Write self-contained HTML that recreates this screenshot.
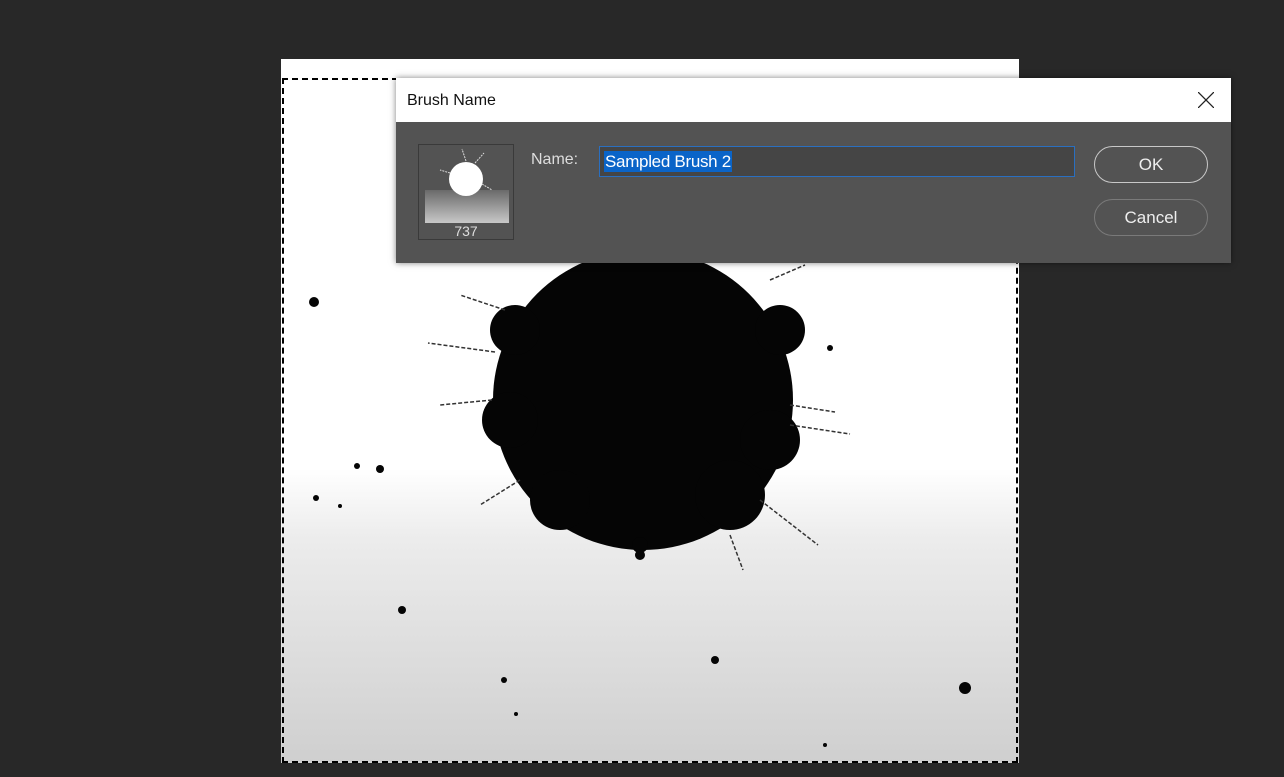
<!DOCTYPE html>
<html><head><style>
body{margin:0;width:1284px;height:777px;background:#282828;position:relative;overflow:hidden;font-family:"Segoe UI","Liberation Sans",sans-serif}
#cv{position:absolute;left:281px;top:59px;width:738px;height:704px;background:linear-gradient(#fff 0,#fff 410px,#ececec 480px,#cfcfcf 704px)}
#sel{position:absolute;left:282px;top:78px;width:736px;height:685px;border:2px dashed #000;box-sizing:border-box}
#dlg{position:absolute;left:396px;top:78px;width:835px;height:185px;background:#535353;box-shadow:0 0 6px rgba(0,0,0,.5)}
#tb{height:44px;background:#fff;color:#111;font-size:16px;line-height:46px;padding-left:11px}
.x{position:absolute;right:17px;top:14px}
#th{position:absolute;left:22px;top:66px;width:96px;height:96px;border:1px solid #3a3a3a;box-sizing:border-box}
#th span{position:absolute;bottom:0;width:100%;text-align:center;color:#ddd;font-size:14px}
#lbl{position:absolute;left:135px;top:73px;color:#ddd;font-size:16px}
#inp{position:absolute;left:203px;top:68px;width:476px;height:31px;border:1px solid #2a6fc0;background:#454545;box-sizing:border-box}
#inp span{position:absolute;left:4px;top:4px;background:#0a64c8;color:#fff;font-size:17px;line-height:21px;padding:0 1px;letter-spacing:-0.3px}
.btn{position:absolute;left:698px;width:114px;height:37px;border-radius:19px;border:1px solid #c8c8c8;box-sizing:border-box;color:#eee;font-size:17px;text-align:center;line-height:35px}
</style></head><body>
<div id="cv">
<svg width="738" height="704" viewBox="281 59 738 704" style="position:absolute;left:0;top:0">
<g fill="#050505">
<circle cx="643" cy="400" r="150"/>
<circle cx="560" cy="500" r="30"/><circle cx="730" cy="495" r="35"/><circle cx="770" cy="440" r="30"/><circle cx="510" cy="420" r="28"/><circle cx="515" cy="330" r="25"/><circle cx="780" cy="330" r="25"/><circle cx="640" cy="545" r="8"/>
<circle cx="314" cy="302" r="5"/><circle cx="357" cy="466" r="3"/><circle cx="380" cy="469" r="4"/><circle cx="316" cy="498" r="3"/><circle cx="402" cy="610" r="4"/><circle cx="715" cy="660" r="4"/><circle cx="965" cy="688" r="6"/><circle cx="504" cy="680" r="3"/><circle cx="516" cy="714" r="2"/><circle cx="825" cy="745" r="2"/><circle cx="340" cy="506" r="2"/><circle cx="640" cy="555" r="5"/><circle cx="830" cy="348" r="3"/>
</g>
<g stroke="#333" stroke-width="1.5" stroke-dasharray="4 2">
<line x1="495" y1="352" x2="428" y2="343"/><line x1="492" y1="400" x2="440" y2="405"/><line x1="790" y1="425" x2="850" y2="434"/><line x1="790" y1="405" x2="835" y2="412"/><line x1="760" y1="500" x2="818" y2="545"/><line x1="520" y1="480" x2="480" y2="505"/><line x1="730" y1="535" x2="743" y2="570"/><line x1="770" y1="280" x2="805" y2="265"/><line x1="505" y1="310" x2="460" y2="295"/>
</g>
</svg>
</div>
<div id="sel"></div>
<div id="dlg">
<div id="tb">Brush Name</div>
<svg class="x" width="16" height="16"><path d="M0 0L16 16M16 0L0 16" stroke="#222" stroke-width="1.3"/></svg>
<div id="th">
<svg width="94" height="80" style="position:absolute;left:1px;top:1px"><defs><linearGradient id="g" x1="0" y1="0" x2="0" y2="1"><stop offset="0" stop-color="#6a6a6a"/><stop offset="1" stop-color="#c8c8c8"/></linearGradient></defs><rect x="5" y="44" width="84" height="33" fill="url(#g)"/><circle cx="46" cy="33" r="17" fill="#fff"/><g stroke="#ddd" stroke-dasharray="2 1"><line x1="46" y1="15" x2="42" y2="3"/><line x1="55" y1="17" x2="64" y2="7"/><line x1="30" y1="27" x2="20" y2="24"/><line x1="62" y1="38" x2="72" y2="44"/></g></svg>
<span>737</span></div>
<div id="lbl">Name:</div>
<div id="inp"><span>Sampled Brush 2</span></div>
<div class="btn" style="top:68px">OK</div>
<div class="btn" style="top:121px;border-color:#7a7a7a">Cancel</div>
</div>
</body></html>
